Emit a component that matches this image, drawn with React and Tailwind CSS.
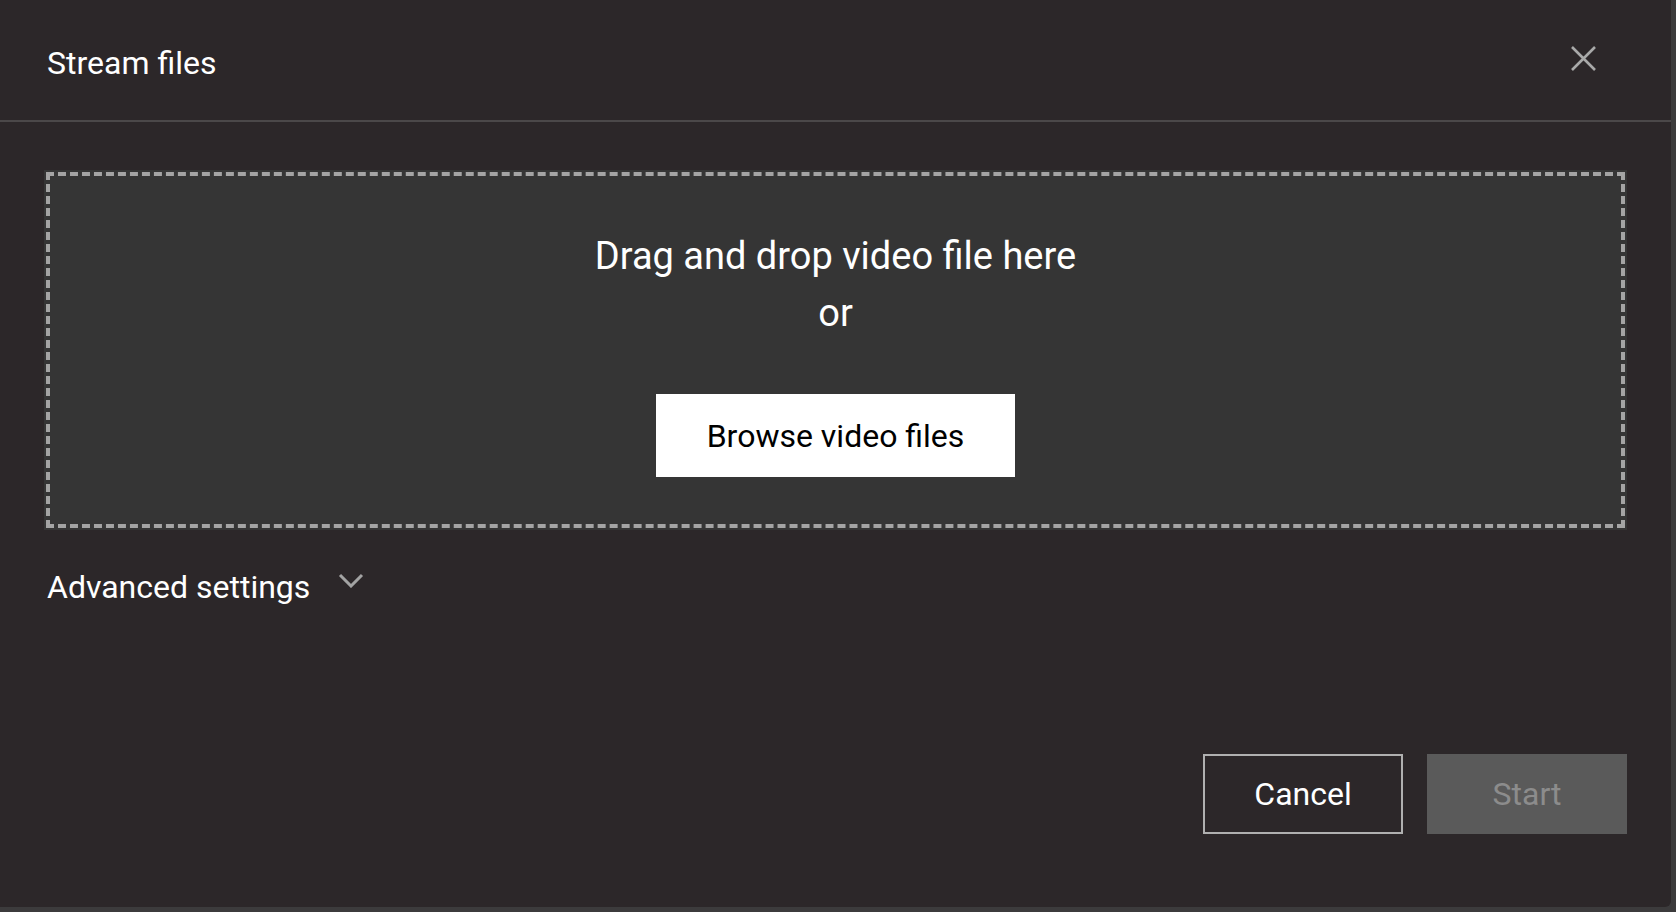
import React from 'react'

const font = { fontFamily: 'Roboto, "Noto Sans", sans-serif' }

const CloseIcon = () => (
  <svg width="25" height="25" viewBox="0 0 25 25" className="text-[#a9a9a9]">
    <path d="M1 1 L24 24 M24 1 L1 24" stroke="currentColor" strokeWidth="2.6" fill="none" />
  </svg>
)

const Chevron = () => (
  <svg width="26" height="15" viewBox="0 0 26 15" className="text-[#a3a3a3]">
    <polyline points="2,2 13,13 24,2" stroke="currentColor" strokeWidth="3" fill="none" />
  </svg>
)

const App = () => {
  return (
    <div className="w-[1676px] h-[912px] bg-[#3c3b3c] overflow-hidden" style={font}>
      <div className="w-[1671px] h-[907px] bg-[#2c2729] rounded-br-md flex flex-col text-white">
        <div className="h-[122px] shrink-0 flex items-start justify-between pl-[47px] pr-[75px] border-b-2 border-[#4b4849]">
          <h2 className="pt-[43px] text-[32px] leading-[40px] font-normal">Stream files</h2>
          <button className="mt-[46px] p-0">
            <CloseIcon />
          </button>
        </div>

        <div className="flex-1 flex flex-col px-[44px] pt-[48px] pb-[73px]">
          <div className="h-[360px] bg-[#353535] p-[2px]">
            <div className="h-full border-4 border-dashed border-[#a4a4a4] flex flex-col items-center pt-[52px]">
              <p className="text-[38px] leading-[57px]">Drag and drop video file here</p>
              <p className="text-[38px] leading-[57px]">or</p>
              <button className="mt-[52px] w-[359px] h-[83px] bg-white text-black text-[32px] leading-[40px]">
                Browse video files
              </button>
            </div>
          </div>

          <button className="mt-[37px] self-start flex items-center gap-[28px] pl-[3px]">
            <span className="text-[32px] leading-[40px]">Advanced settings</span>
            <span className="-mt-[14px]"><Chevron /></span>
          </button>

          <div className="mt-auto flex justify-end gap-[24px]">
            <button className="w-[200px] h-[80px] border-2 border-[#b0b0b0] text-white text-[32px] leading-[40px]">
              Cancel
            </button>
            <button disabled className="w-[200px] h-[80px] bg-[#5a5a5a] text-[#8c8c8c] text-[32px] leading-[40px]">
              Start
            </button>
          </div>
        </div>
      </div>
    </div>
  )
}

export default App
